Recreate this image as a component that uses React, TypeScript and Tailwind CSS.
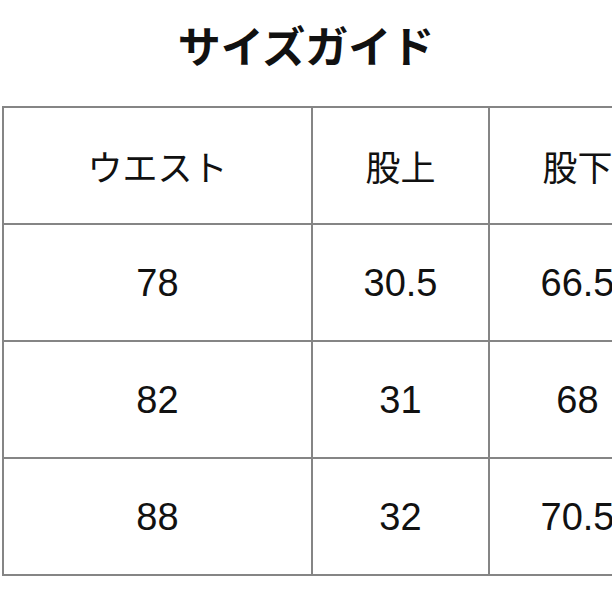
import React from "react";

const jp = { fontFamily: '"Noto Sans CJK JP", "Noto Sans", sans-serif' };
const num = { fontFamily: '"Liberation Sans", Arial, sans-serif' };

const rows = [
  ["78", "30.5", "66.5"],
  ["82", "31", "68"],
  ["88", "32", "70.5"],
];

const widths = ["w-[309px]", "w-[177px]", "w-[177px]"];

export default function App() {
  return (
    <div className="w-[612px] h-[612px] overflow-hidden bg-white text-[#111]">
      <div className="h-[106px] pt-[23px] text-center">
        <div className="text-[43px] leading-none font-bold" style={jp}>
          サイズガイド
        </div>
      </div>
      <div className="ml-[2px] w-[665px] border-l-2 border-t-2 border-[#858585]">
        <div className="flex">
          {["ウエスト", "股上", "股下"].map((h, i) => (
            <div
              key={h}
              className={`${widths[i]} h-[117px] shrink-0 flex items-center justify-center border-r-2 border-b-2 border-[#858585] text-[35px] leading-none`}
              style={jp}
            >
              {h}
            </div>
          ))}
        </div>
        {rows.map((r, ri) => (
          <div key={ri} className="flex">
            {r.map((c, i) => (
              <div
                key={i}
                className={`${widths[i]} h-[117px] shrink-0 flex items-center justify-center border-r-2 border-b-2 border-[#858585] text-[38px] leading-none`}
                style={num}
              >
                {c}
              </div>
            ))}
          </div>
        ))}
      </div>
    </div>
  );
}
